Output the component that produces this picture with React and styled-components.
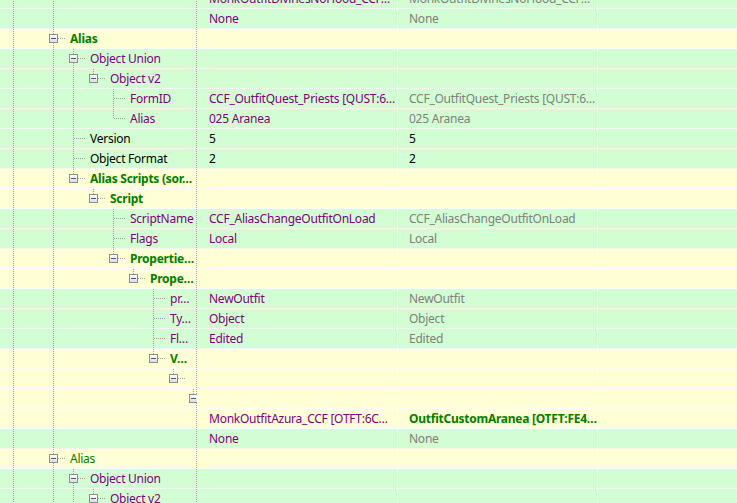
import styled, { createGlobalStyle, css } from 'styled-components'

const GlobalStyle = createGlobalStyle`
  html, body {
    margin: 0;
    padding: 0;
    background: #fff;
  }
  body {
    font-family: "Noto Sans", "Open Sans", sans-serif;
    font-size: 12px;
    letter-spacing: -0.25px;
  }
`

const GREEN = '#d3fdd3'
const YELLOW = '#fffed5'

// tree rows: level, guide columns that pass through, kind of node, last sibling?
const rows = [
  { level: 8, guides: [-2, 0], kind: 'leaf', bg: GREEN, v1: 'MonkOutfitDivinesNoHood_CCF…', t1: 'purple', v2: 'MonkOutfitDivinesNoHood_CCF…', t2: 'gray' },
  { level: 8, guides: [-2, 0], kind: 'leaf', bg: GREEN, v1: 'None', t1: 'purple', v2: 'None', t2: 'gray' },
  { level: 0, guides: [-2], kind: 'open', down: true, bg: YELLOW, name: 'Alias', tn: 'group' },
  { level: 1, guides: [-2, 0], kind: 'open', down: true, bg: GREEN, name: 'Object Union', tn: 'purple' },
  { level: 2, guides: [-2, 0, 1], kind: 'open', bg: GREEN, name: 'Object v2', tn: 'purple' },
  { level: 3, guides: [-2, 0, 1], kind: 'leaf', down: true, bg: GREEN, name: 'FormID', tn: 'purple', v1: 'CCF_OutfitQuest_Priests [QUST:6…', t1: 'purple', v2: 'CCF_OutfitQuest_Priests [QUST:6…', t2: 'gray' },
  { level: 3, guides: [-2, 0, 1], kind: 'leaf', bg: GREEN, name: 'Alias', tn: 'purple', v1: '025 Aranea', t1: 'purple', v2: '025 Aranea', t2: 'gray' },
  { level: 1, guides: [-2, 0], kind: 'leaf', down: true, bg: GREEN, name: 'Version', tn: 'black', v1: '5', t1: 'black', v2: '5', t2: 'black' },
  { level: 1, guides: [-2, 0], kind: 'leaf', down: true, bg: GREEN, name: 'Object Format', tn: 'black', v1: '2', t1: 'black', v2: '2', t2: 'black' },
  { level: 1, guides: [-2, 0], kind: 'open', bg: YELLOW, name: 'Alias Scripts (sor…', tn: 'group' },
  { level: 2, guides: [-2, 0], kind: 'open', bg: YELLOW, name: 'Script', tn: 'group' },
  { level: 3, guides: [-2, 0], kind: 'leaf', down: true, bg: GREEN, name: 'ScriptName', tn: 'purple', v1: 'CCF_AliasChangeOutfitOnLoad', t1: 'purple', v2: 'CCF_AliasChangeOutfitOnLoad', t2: 'gray' },
  { level: 3, guides: [-2, 0], kind: 'leaf', down: true, bg: GREEN, name: 'Flags', tn: 'purple', v1: 'Local', t1: 'purple', v2: 'Local', t2: 'gray' },
  { level: 3, guides: [-2, 0], kind: 'open', bg: YELLOW, name: 'Propertie…', tn: 'group' },
  { level: 4, guides: [-2, 0], kind: 'open', bg: YELLOW, name: 'Prope…', tn: 'group' },
  { level: 5, guides: [-2, 0], kind: 'leaf', down: true, bg: GREEN, name: 'pr…', tn: 'purple', v1: 'NewOutfit', t1: 'purple', v2: 'NewOutfit', t2: 'gray' },
  { level: 5, guides: [-2, 0], kind: 'leaf', down: true, bg: GREEN, name: 'Ty…', tn: 'purple', v1: 'Object', t1: 'purple', v2: 'Object', t2: 'gray' },
  { level: 5, guides: [-2, 0], kind: 'leaf', down: true, bg: GREEN, name: 'Fl…', tn: 'purple', v1: 'Edited', t1: 'purple', v2: 'Edited', t2: 'gray' },
  { level: 5, guides: [-2, 0], kind: 'open', bg: YELLOW, name: 'V…', tn: 'group' },
  { level: 6, guides: [-2, 0], kind: 'open', bg: YELLOW },
  { level: 7, guides: [-2, 0], kind: 'open', bg: YELLOW },
  { level: 8, guides: [-2, 0], kind: 'leaf', down: true, bg: YELLOW, v1: 'MonkOutfitAzura_CCF [OTFT:6C…', t1: 'purple', v2: 'OutfitCustomAranea [OTFT:FE4…', t2: 'green' },
  { level: 8, guides: [-2, 0], kind: 'leaf', bg: GREEN, v1: 'None', t1: 'purple', v2: 'None', t2: 'gray' },
  { level: 0, guides: [-2], kind: 'open', down: true, bg: YELLOW, name: 'Alias', tn: 'groupPlain' },
  { level: 1, guides: [-2, 0], kind: 'open', down: true, bg: GREEN, name: 'Object Union', tn: 'purple' },
  { level: 2, guides: [-2, 0, 1], kind: 'open', bg: GREEN, name: 'Object v2', tn: 'purple' },
]

const tones = {
  purple: css`color: #800080;`,
  gray: css`color: #808080;`,
  black: css`color: #000;`,
  green: css`color: #008000; font-weight: 700;`,
  group: css`color: #008000; font-weight: 700;`,
  groupPlain: css`color: #008000;`,
}

const Viewport = styled.div`
  width: 737px;
  height: 503px;
  overflow: hidden;
`

const Tree = styled.div`
  margin-top: -11px;
`

const Row = styled.div`
  display: grid;
  grid-template-columns: 197px 201px 200px 1fr;
  height: 20px;
  background-color: ${(p) => p.$bg};
  background-image: repeating-linear-gradient(90deg, #fff 0 1px, transparent 1px 2px);
  background-size: 100% 1px;
  background-position: left bottom;
  background-repeat: no-repeat;
`

const Cell = styled.div`
  display: flex;
  align-items: flex-start;
  overflow: hidden;
  white-space: nowrap;
  padding-left: ${(p) => p.$pad}px;
  background-image: repeating-linear-gradient(180deg, ${(p) => p.$sep} 0 1px, transparent 1px 2px);
  background-size: 1px 100%;
  background-position: right top;
  background-repeat: no-repeat;
`

const Label = styled.span`
  line-height: 19px;
  ${(p) => tones[p.$tone] || ''}
`

const NameLabel = styled(Label)`
  margin-left: 3px;
`

const Seg = styled.svg`
  flex: none;
  display: block;
`

const dot = { stroke: '#a0a0a0', strokeWidth: 1, strokeDasharray: '1 1', fill: 'none' }

const Guide = ({ on }) => (
  <Seg width="20" height="20">
    {on && <line x1="10.5" y1="0" x2="10.5" y2="20" style={dot} />}
  </Seg>
)

const Node = ({ kind, down }) => {
  const open = kind === 'open'
  return (
    <Seg width="24" height="20">
      <line x1="10.5" y1="0" x2="10.5" y2={open ? 5 : 10} style={dot} />
      {down && <line x1="10.5" y1={open ? 14 : 10} x2="10.5" y2="20" style={dot} />}
      <line x1={open ? 15 : 11} y1="9.5" x2="23" y2="9.5" style={dot} />
      {open && (
        <>
          <defs>
            <linearGradient id="btn" x1="0" y1="0" x2="0" y2="1">
              <stop offset="0" stopColor="#ffffff" />
              <stop offset="1" stopColor="#dcdcdc" />
            </linearGradient>
          </defs>
          <rect x="6.5" y="5.5" width="8" height="8" fill="url(#btn)" stroke="#8e8f8f" />
          <line x1="8" y1="9.5" x2="13" y2="9.5" stroke="#3b5c98" strokeWidth="1" />
        </>
      )}
    </Seg>
  )
}

const NameCell = ({ row }) => {
  const slots = []
  for (let l = -2; l < row.level; l++) {
    slots.push(<Guide key={l} on={row.guides.includes(l)} />)
  }
  return (
    <Cell $pad={3} $sep="#a8a8a8">
      {slots}
      <Node kind={row.kind} down={row.down} />
      {row.name && <NameLabel $tone={row.tn}>{row.name}</NameLabel>}
    </Cell>
  )
}

export default function App() {
  return (
    <Viewport>
      <GlobalStyle />
      <Tree>
        {rows.map((row, i) => (
          <Row key={i} $bg={row.bg}>
            <NameCell row={row} />
            <Cell $pad={12} $sep="#fff">
              {row.v1 && <Label $tone={row.t1}>{row.v1}</Label>}
            </Cell>
            <Cell $pad={11} $sep="#fff">
              {row.v2 && <Label $tone={row.t2}>{row.v2}</Label>}
            </Cell>
            <Cell $pad={0} $sep="transparent" />
          </Row>
        ))}
      </Tree>
    </Viewport>
  )
}
